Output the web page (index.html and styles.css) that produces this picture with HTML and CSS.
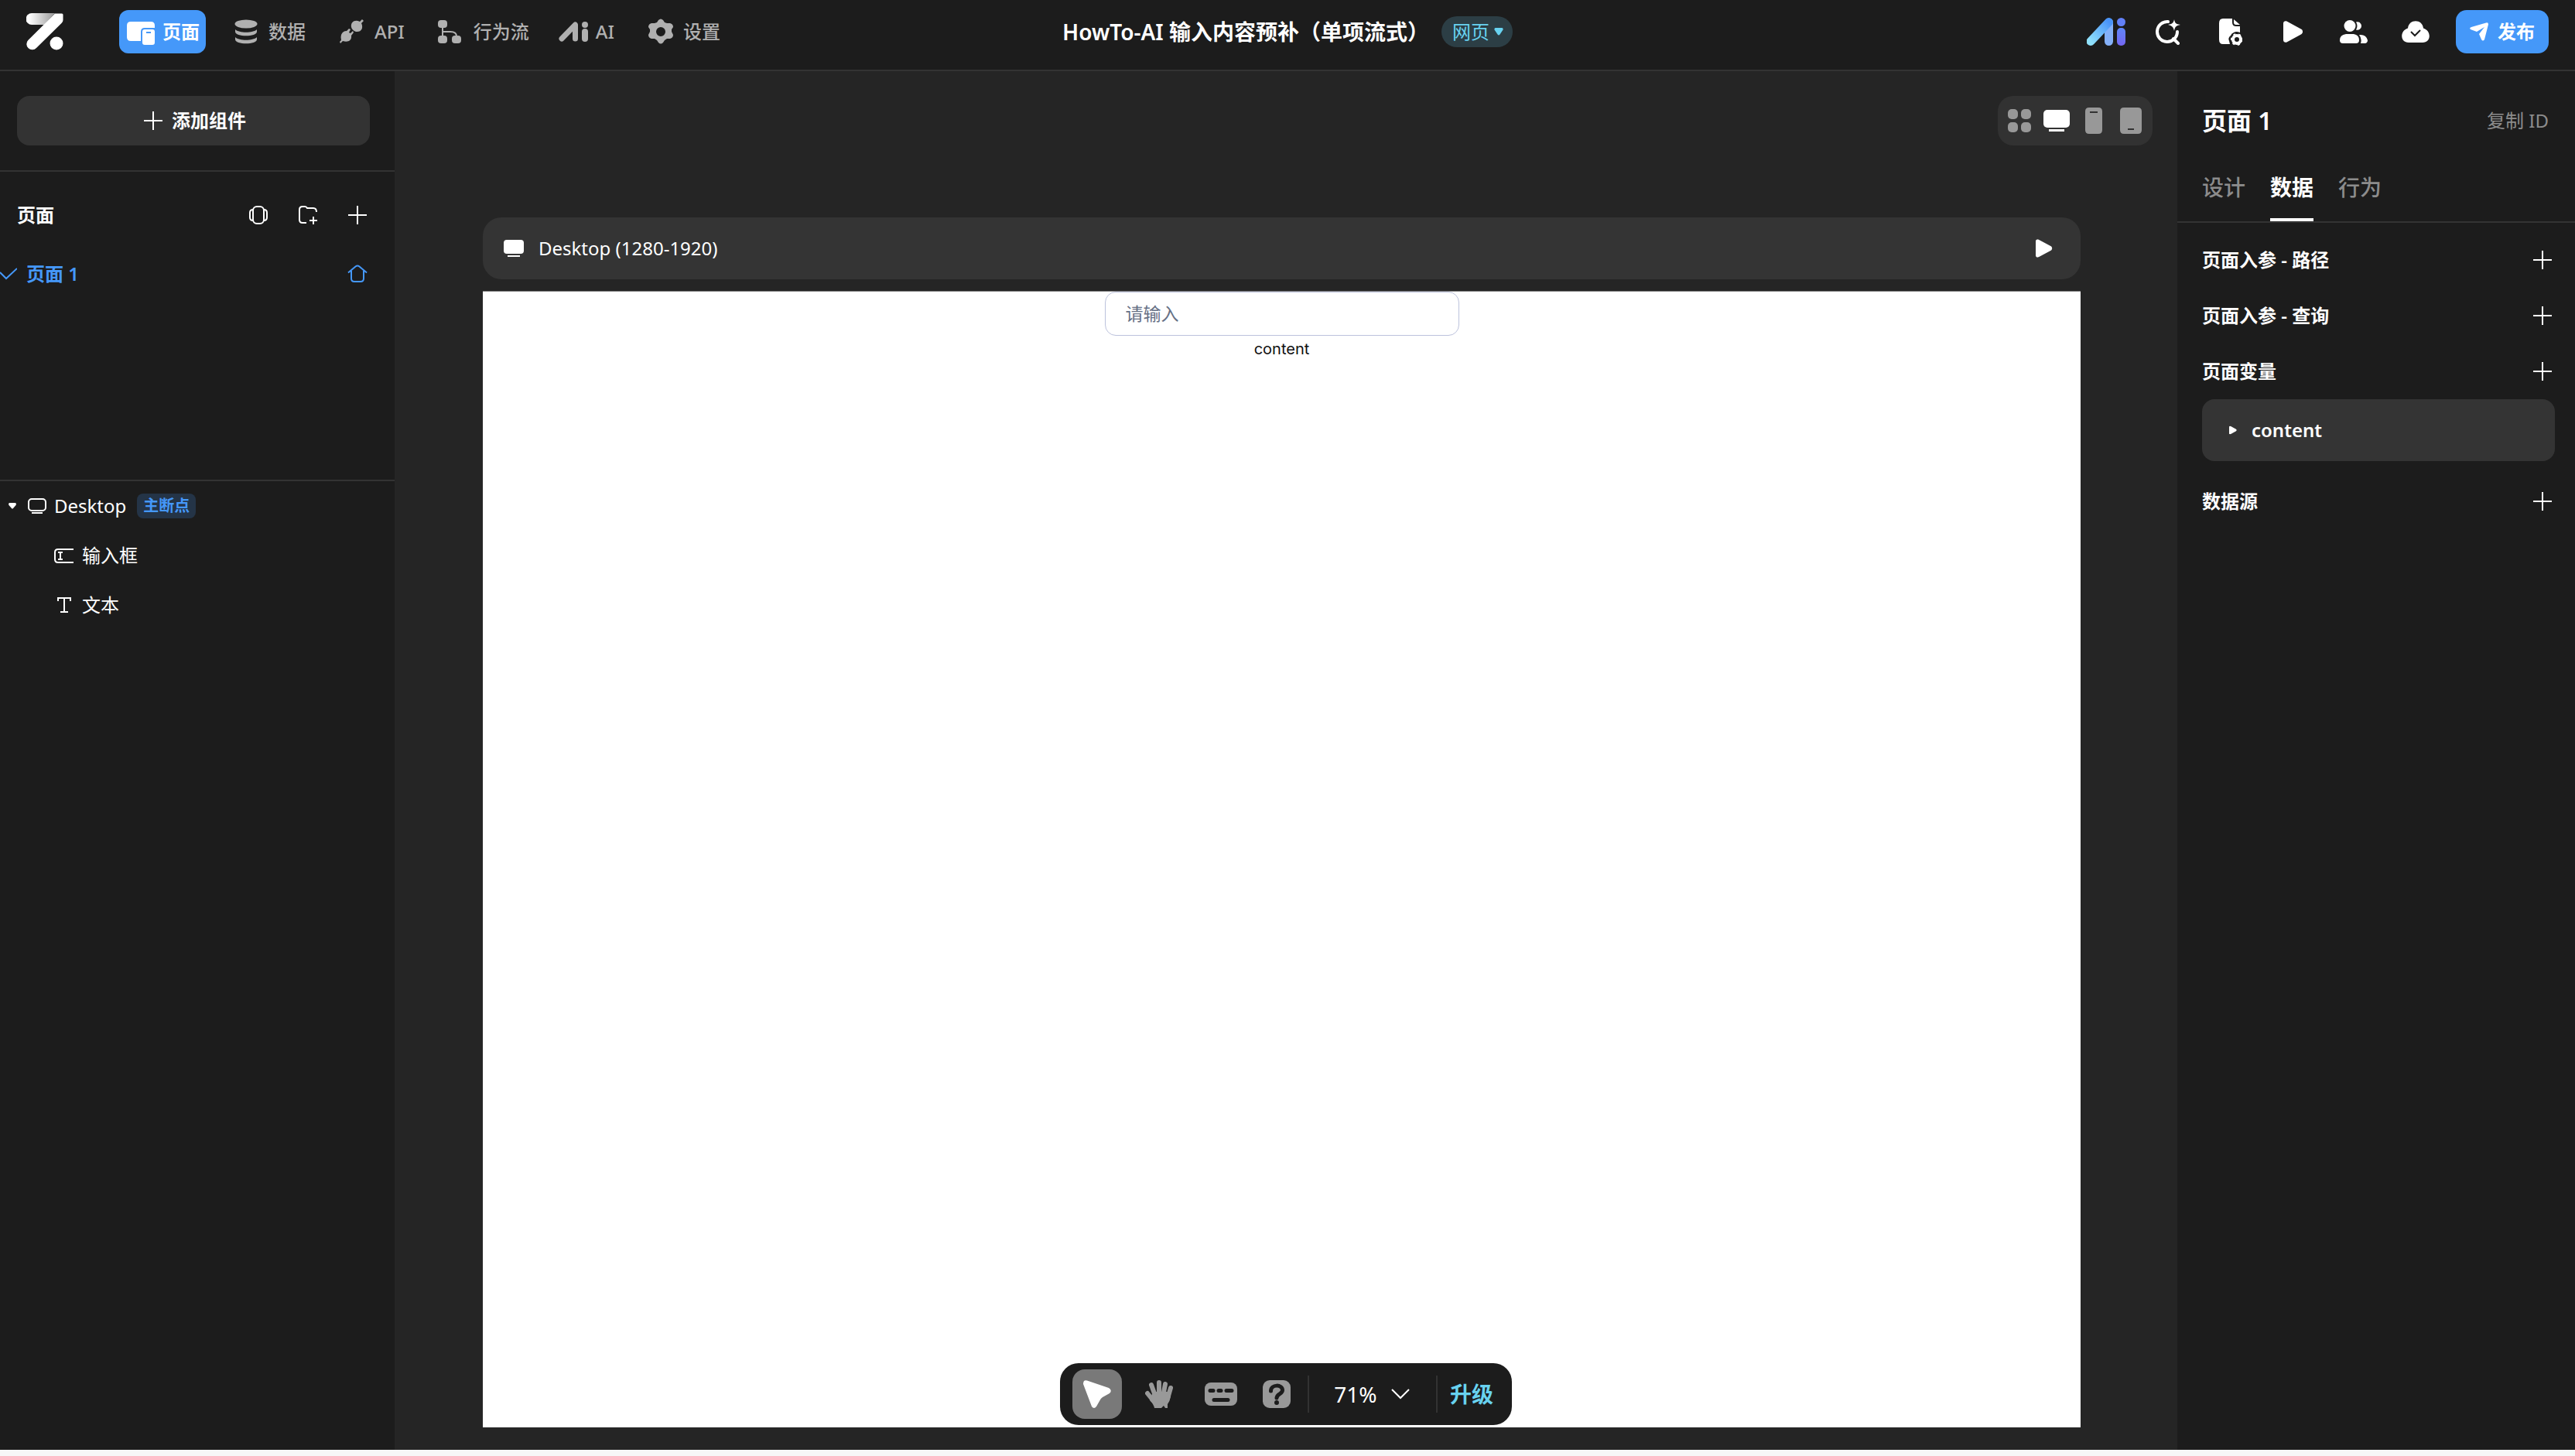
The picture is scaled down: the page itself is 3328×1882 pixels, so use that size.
FILE: index.html
```
<!DOCTYPE html>
<html lang="zh-CN">
<head>
    <meta charset="UTF-8">
    <meta name="viewport" content="width=device-width, initial-scale=1.0">
    <title>HowTo-AI 输入内容预补（单项流式）</title>
    <link rel="stylesheet" href="styles.css">
</head>
<body>
    <svg class="sprite" aria-hidden="true">
        <symbol id="plus" viewBox="0 0 24 24"><path d="M12 0v24M0 12h24" stroke="currentColor" stroke-width="2" fill="none"/></symbol>
        <symbol id="screen" viewBox="0 0 26 22"><rect width="26" height="18" rx="4"/><path d="M5 20h16v2H5z"/></symbol>
        <symbol id="play" viewBox="0 0 26 28"><path d="M0 3.200C0 .8 2.500-.6 4.500.6l18.800 10.200c2.300 1.300 2.300 5.100 0 6.400L4.500 27.400C2.500 28.600 0 27.200 0 24.800z"/></symbol>
    </svg>
    <div class="app">
        <header class="topbar">
            <div class="topbar-left">
                <a href="#" class="logo" aria-label="首页">
                    <svg width="48" height="48" viewBox="0 0 48 48">
                        <defs>
                            <linearGradient id="logoBar" x1="0" x2="1"><stop offset="0.100" stop-color="#fff"/><stop offset="1" stop-color="#999"/></linearGradient>
                        </defs>
                        <path d="M7 0h30L23 15H7A7 7 0 0 1 7 0z" fill="url(#logoBar)"/>
                        <path d="M37 0.500h9q1.500 0 1.500 1.500v7q0 2-2 4L13 45A7.300 7.300 0 0 1 2.300 35z" fill="#fff"/>
                        <circle cx="39" cy="39" r="8.500" fill="#fff"/>
                    </svg>
                </a>
                <nav class="nav">
                    <button class="nav-item active">
                        <svg width="36" height="36" viewBox="0 0 36 36">
                            <path d="M5 5h26q5 0 5 5v3H23q-5 0-5 5v12H5q-5 0-5-5V10q0-5 5-5z"/>
                            <path fill-rule="evenodd" d="M23 15h10q3 0 3 3v14q0 3-3 3H23q-3 0-3-3V18q0-3 3-3zm2 3v2h6v-2z"/>
                        </svg>
                        页面
                    </button>
                    <button class="nav-item">
                        <svg width="36" height="36" viewBox="0 0 36 36">
                            <ellipse cx="17" cy="8" rx="14.500" ry="5.500"/>
                            <path d="M3 15c5 5 23 5 28 0v3c0 7-28 7-28 0zM3 25c5 5 23 5 28 0v3c0 7-28 7-28 0z"/>
                        </svg>
                        数据
                    </button>
                    <button class="nav-item">
                        <svg width="36" height="36" viewBox="0 0 36 36">
                            <path d="M16 12c-1-7 5-10 11-7l3-3 2 2-3 3c3 6 0 12-7 11q-5-2-6-6z"/>
                            <path d="M3 22q2-5 7-5l3-3 2 1-2 4 2 1 3-3 1 2-3 4c1 7-5 9-11 7l-3 3-1-2 2-2q-1-4 0-7z"/>
                        </svg>
                        API
                    </button>
                    <button class="nav-item">
                        <svg width="36" height="36" viewBox="0 0 36 36">
                            <rect y="3" width="12" height="10" rx="4"/><rect y="23" width="12" height="10" rx="4"/><rect x="18" y="23" width="12" height="10" rx="4"/>
                            <path d="M6 12v12M6 18h10q8 0 8 6" fill="none" stroke="currentColor" stroke-width="2"/>
                        </svg>
                        行为流
                    </button>
                    <button class="nav-item nav-ai">
                        <svg width="38" height="36" viewBox="0 0 38 36">
                            <path d="M4 27L21.500 9V27" fill="none" stroke="currentColor" stroke-width="7" stroke-linecap="round" stroke-linejoin="round"/>
                            <circle cx="34" cy="9" r="4"/><rect x="30" y="14" width="8" height="17" rx="4"/>
                        </svg>
                        AI
                    </button>
                    <button class="nav-item">
                        <svg width="36" height="36" viewBox="0 0 36 36">
                            <path fill-rule="evenodd" d="M14 3q3-3 6 0l2 3 3 1 4 0q4 1 4 5l-2 3v3l2 4q0 4-4 5h-4l-3 2-2 3q-3 3-6 0l-2-3-3-2H5q-4-1-4-5l2-4v-3l-2-3q0-4 4-5h4l3-1zm3 9a6 6 0 1 0 0 12 6 6 0 0 0 0-12z"/>
                        </svg>
                        设置
                    </button>
                </nav>
            </div>
            <div class="project">
                <h1>HowTo-AI 输入内容预补（单项流式）</h1>
                <button class="platform">网页
                    <svg width="12" height="12" viewBox="0 0 12 12"><path d="M1.500 1h9Q12 1 11.500 3.500L7.500 9.500Q6 11.500 4.500 9.500L.5 3.500Q0 1 1.500 1z"/></svg>
                </button>
            </div>
            <div class="actions">
                <button class="action" aria-label="AI 助手">
                    <svg width="50" height="36" viewBox="0 0 50 36">
                        <defs>
                            <linearGradient id="aiStroke" x1="0" y1="1" x2="1" y2="0"><stop offset="0" stop-color="#8fe0fb"/><stop offset="1" stop-color="#4a94f8"/></linearGradient>
                            <linearGradient id="aiDot" x1="0" y1="0" x2="0" y2="1"><stop offset="0" stop-color="#5f86f7"/><stop offset="1" stop-color="#7466f2"/></linearGradient>
                        </defs>
                        <path d="M28.500 6v24.500" stroke="#84b0f8" stroke-width="11" stroke-linecap="round"/>
                        <path d="M5 30.500L28.500 5.500" stroke="url(#aiStroke)" stroke-width="11" stroke-linecap="round"/>
                        <circle cx="44.500" cy="5.500" r="5.500" fill="#6280f7"/><rect x="39" y="13" width="11" height="23" rx="5" fill="url(#aiDot)"/>
                    </svg>
                </button>
                <button class="action" aria-label="智能搜索">
                    <svg width="32" height="34" viewBox="0 0 32 34">
                        <path d="M16 4A13 13 0 1 0 28 17M23 26l6 6" fill="none" stroke="currentColor" stroke-width="4" stroke-linecap="round"/>
                        <path d="M24 1c1 5 2 6 8 7-6 1-7 3-8 8-1-5-3-7-8-8 5-1 7-2 8-7z"/>
                    </svg>
                </button>
                <button class="action" aria-label="文档设置">
                    <svg width="32" height="36" viewBox="-1 0 32 36">
                        <path d="M6 1h12v5q0 5 5 5h5v8q-5-2-8 0-3 1-4 4-4 3-2 7l1 4H6q-5 0-5-6V7q0-6 5-6z"/><path d="M20 2l8 7h-5q-3 0-3-3z"/>
                        <circle cx="24" cy="28" r="5" fill="none" stroke="currentColor" stroke-width="4"/>
                        <circle cx="24" cy="28" r="7" fill="none" stroke="currentColor" stroke-width="2" stroke-dasharray="3 4"/>
                    </svg>
                </button>
                <button class="action" aria-label="预览"><svg width="30" height="28" viewBox="-4 0 30 28"><use href="#play" width="26" height="28"/></svg></button>
                <button class="action" aria-label="协作">
                    <svg width="36" height="30" viewBox="0 0 36 30">
                        <circle cx="13" cy="7.500" r="7.500"/><path d="M21 2.500a5.300 5.300 0 1 1 0 10q3-5 0-10z"/>
                        <path d="M8 18h10q7 1 7 8 0 4-4 4H4q-4 0-4-4 0-7 8-8zM25 19q9-1 11 7 0 3-3 4h-6q2-6-2-11z"/>
                    </svg>
                </button>
                <button class="action" aria-label="已保存">
                    <svg width="36" height="28" viewBox="0 0 36 28">
                        <path d="M8 9.500C9-3 27-3 28 9.500 39 13 38 28 27 28H9C-2 28-3 13 8 9.500z"/>
                        <path d="M12 14l5 5 7-7" fill="none" stroke="#1c1c1c" stroke-width="2"/>
                    </svg>
                </button>
                <button class="publish">
                    <svg width="24" height="24" viewBox="0 0 24 24"><path d="M21 .5q3-1 3 2L19 22q-2 3-4 0l-3-7 7-9-10 6L1 9q-2-2 1-3z"/></svg>
                    发布
                </button>
            </div>
        </header>

        <div class="workspace">
            <aside class="sidebar">
                <div class="add-wrap">
                    <button class="add-component"><svg width="24" height="24"><use href="#plus"/></svg>添加组件</button>
                </div>
                <section class="pages">
                    <div class="pages-head">
                        <h2>页面</h2>
                        <button aria-label="弹窗">
                            <svg width="24" height="24" viewBox="0 0 24 24" fill="none" stroke="currentColor" stroke-width="2"><rect x="5" y="1" width="14" height="22" rx="5"/><path d="M5 5Q1 5 1 9v6q0 4 4 4M19 5q4 0 4 4v6q0 4-4 4"/></svg>
                        </button>
                        <button aria-label="新建文件夹">
                            <svg width="26" height="24" viewBox="0 0 26 24" fill="none" stroke="currentColor" stroke-width="2"><path d="M11 22H6q-4 0-4-4V5q0-4 4-4h3q2 0 3 2h8q4 0 4 5M20 14v10M15 19h10"/></svg>
                        </button>
                        <button aria-label="新建页面"><svg width="24" height="24"><use href="#plus"/></svg></button>
                    </div>
                    <a href="#" class="page-row">
                        <svg width="22" height="16" viewBox="0 0 22 16" fill="none" stroke="currentColor" stroke-width="2"><path d="M0 6l8 8L22 1"/></svg>
                        <span>页面 1</span>
                        <svg width="26" height="24" viewBox="0 0 26 24" fill="none" stroke="currentColor" stroke-width="2"><path d="M1 10.500L10.500 2.500q2.500-2 5 0L25 10.500M5 8v10q0 4 4 4h8q4 0 4-4V8"/></svg>
                    </a>
                </section>
                <ul class="layers">
                    <li class="layer">
                        <svg class="caret" width="10" height="8" viewBox="0 0 10 8"><path d="M1 0h8q1.500 1 .5 3L6 7Q5 8 4 7L.5 3Q-.5 1 1 0z"/></svg>
                        <svg width="24" height="20" viewBox="0 0 24 20" fill="none" stroke="currentColor" stroke-width="2"><rect x="1" y="1" width="22" height="15" rx="4"/><path d="M5 19h14"/></svg>
                        <span>Desktop</span>
                        <span class="tag">主断点</span>
                    </li>
                    <li class="layer child">
                        <svg width="26" height="20" viewBox="0 0 26 20" fill="none" stroke="currentColor" stroke-width="2"><path d="M25 2H5Q1 2 1 6v9q0 4 4 4h20M5 6h6M5 15h6M8 6v9"/></svg>
                        <span>输入框</span>
                    </li>
                    <li class="layer child">
                        <svg width="26" height="20" viewBox="0 0 26 20" fill="none" stroke="currentColor" stroke-width="2"><path d="M5 5V1h16v4M13 1v18M8 19h10"/></svg>
                        <span>文本</span>
                    </li>
                </ul>
            </aside>

            <main class="stage">
                <div class="devices">
                    <button aria-label="全部">
                        <svg width="30" height="30" viewBox="0 0 30 30"><rect width="13" height="13" rx="5"/><rect x="17" width="13" height="13" rx="5"/><rect y="17" width="13" height="13" rx="5"/><rect x="17" y="17" width="13" height="13" rx="5"/></svg>
                    </button>
                    <button class="active" aria-label="桌面"><svg width="34" height="28" viewBox="0 0 34 28"><rect width="34" height="23" rx="5"/><path d="M7 25h20v3H7z"/></svg></button>
                    <button aria-label="手机"><svg width="22" height="34" viewBox="0 0 22 34"><path fill-rule="evenodd" d="M5 0h12q5 0 5 5v24q0 5-5 5H5q-5 0-5-5V5q0-5 5-5zm1 5v2h10V5z"/></svg></button>
                    <button aria-label="平板"><svg width="28" height="34" viewBox="0 0 28 34"><path fill-rule="evenodd" d="M5 0h18q5 0 5 5v24q0 5-5 5H5q-5 0-5-5V5q0-5 5-5zm5 27v2h8v-2z"/></svg></button>
                </div>
                <div class="frame-bar">
                    <svg width="26" height="22"><use href="#screen"/></svg>
                    <span>Desktop (1280-1920)</span>
                    <button aria-label="运行"><svg width="22" height="24" viewBox="0 0 26 28"><use href="#play" width="26" height="28"/></svg></button>
                </div>
                <div class="canvas">
                    <input type="text" class="field" placeholder="请输入" aria-label="请输入">
                    <p>content</p>
                </div>
                <div class="toolbar">
                    <button class="tool selected" aria-label="选择">
                        <svg width="36" height="36" viewBox="0 0 36 36"><path d="M0 5Q0-1 5 .5L33 10q5 3 1 7l-9 5q-3 2-4 5l-4 7q-3 4-6 0z"/></svg>
                    </button>
                    <button class="tool" aria-label="移动">
                        <svg width="36" height="36" viewBox="0 0 36 36">
                            <path d="M3 17l8 10M8 6l5 14M18 3v18M26 5l-3 16M33 10l-4 14" fill="none" stroke="currentColor" stroke-width="6" stroke-linecap="round"/>
                            <path d="M10 15h20l3 6q-1 6-4 10v5h-3l-2-3-3 3h-9q-1-5-6-10z"/>
                        </svg>
                    </button>
                    <button class="tool" aria-label="快捷键">
                        <svg width="42" height="30" viewBox="0 0 42 30"><rect width="42" height="30" rx="8"/><path d="M7 10.500h4M18 10.500h3M28 10.500h7M12 22.500h18" stroke="#1c1c1c" stroke-width="5" stroke-linecap="round"/></svg>
                    </button>
                    <button class="tool help" aria-label="帮助">
                        <svg width="36" height="36" viewBox="0 0 36 36"><rect width="36" height="36" rx="9"/><path d="M10.500 14c0-9 15-9 15-1 0 5-7 4-7.500 10" fill="none" stroke="#1c1c1c" stroke-width="5" stroke-linecap="round"/><circle cx="18" cy="29" r="3" fill="#1c1c1c"/></svg>
                    </button>
                    <button class="zoom">71%
                        <svg width="24" height="14" viewBox="0 0 24 14"><path d="M1 1l11 11L23 1" fill="none" stroke="currentColor" stroke-width="2"/></svg>
                    </button>
                    <button class="upgrade">升级</button>
                </div>
            </main>

            <aside class="panel">
                <div class="panel-head">
                    <h2>页面 1</h2>
                    <button>复制 ID</button>
                </div>
                <div class="tabs">
                    <button>设计</button>
                    <button class="active">数据</button>
                    <button>行为</button>
                </div>
                <div class="sections">
                    <div class="section">
                        <h3>页面入参 - 路径</h3>
                        <button aria-label="添加路径参数"><svg width="24" height="24"><use href="#plus"/></svg></button>
                    </div>
                    <div class="section">
                        <h3>页面入参 - 查询</h3>
                        <button aria-label="添加查询参数"><svg width="24" height="24"><use href="#plus"/></svg></button>
                    </div>
                    <div class="section">
                        <h3>页面变量</h3>
                        <button aria-label="添加变量"><svg width="24" height="24"><use href="#plus"/></svg></button>
                    </div>
                    <button class="variable">
                        <svg width="10" height="12" viewBox="0 0 26 28"><use href="#play" width="26" height="28"/></svg>
                        content
                    </button>
                    <div class="section">
                        <h3>数据源</h3>
                        <button aria-label="添加数据源"><svg width="24" height="24"><use href="#plus"/></svg></button>
                    </div>
                </div>
            </aside>
        </div>
    </div>
</body>
</html>
```
FILE: styles.css
```
* {
    box-sizing: border-box;
    margin: 0;
    padding: 0;
}

body {
    background: #f7f7f7;
    color: #ffffff;
    font-family: "Noto Sans", "Noto Sans CJK SC", sans-serif;
    font-size: 24px;
    line-height: 32px;
}

button {
    display: flex;
    align-items: center;
    justify-content: center;
    border: none;
    background: none;
    color: inherit;
    font: inherit;
    cursor: pointer;
}

a {
    color: inherit;
    text-decoration: none;
}

svg {
    display: block;
    flex-shrink: 0;
    fill: currentColor;
}

svg[fill="none"] {
    fill: none;
}

.sprite {
    position: absolute;
    width: 0;
    height: 0;
}

.app {
    display: flex;
    flex-direction: column;
    min-height: calc(100vh - 8px);
    background: #1c1c1c;
}

/* top bar */
.topbar {
    display: grid;
    grid-template-columns: 1fr auto 1fr;
    align-items: center;
    height: 92px;
    padding: 0 34px 8px;
    border-bottom: 2px solid #333333;
}

.topbar-left,
.nav,
.project,
.actions {
    display: flex;
    align-items: center;
}

.logo {
    margin-right: 72px;
}

.nav {
    gap: 25px;
    color: #b0b0b0;
    font-weight: 500;
}

.nav-item {
    gap: 10px;
    height: 56px;
    padding: 0 8px 0 10px;
    border-radius: 12px;
    white-space: nowrap;
}

.nav-item.active {
    background: #4598f9;
    color: #ffffff;
    font-weight: 600;
}

.nav-ai {
    padding-left: 5px;
}

.project {
    gap: 16px;
}

.project h1 {
    font-size: 28px;
    font-weight: 600;
    white-space: nowrap;
}

.platform {
    gap: 6px;
    height: 40px;
    padding: 0 12px 0 14px;
    border-radius: 20px;
    background: #2c3e45;
    color: #68d2f0;
}

.actions {
    justify-content: flex-end;
}

.action {
    width: 80px;
    height: 56px;
}

.publish {
    gap: 12px;
    width: 120px;
    height: 56px;
    margin-left: 12px;
    border-radius: 14px;
    background: #4598f9;
    font-weight: 600;
}

.workspace {
    display: flex;
    flex: 1;
}

/* left sidebar */
.sidebar {
    width: 510px;
    flex-shrink: 0;
}

.add-wrap {
    padding: 32px 32px 32px 22px;
    border-bottom: 2px solid #333333;
}

.add-component {
    gap: 12px;
    width: 100%;
    height: 64px;
    padding-left: 4px;
    border-radius: 16px;
    background: #333333;
    font-weight: 600;
}

.pages {
    height: 400px;
    padding-top: 24px;
    border-bottom: 2px solid #333333;
}

.pages-head {
    display: flex;
    align-items: center;
    height: 64px;
    padding: 0 16px 0 22px;
}

.pages-head h2 {
    flex: 1;
    font-size: 24px;
    font-weight: 600;
}

.pages-head button {
    width: 64px;
    height: 64px;
}

.page-row {
    display: flex;
    align-items: center;
    gap: 12px;
    height: 64px;
    margin-top: 12px;
    padding-right: 35px;
    color: #4598f9;
    font-weight: 600;
}

.page-row span {
    flex: 1;
}

.layers {
    list-style: none;
}

.layer {
    display: flex;
    align-items: center;
    gap: 10px;
    height: 64px;
    padding-left: 11px;
}

.layer .caret {
    margin-right: 5px;
}

.layer.child {
    padding-left: 70px;
}

.tag {
    margin-left: 4px;
    padding: 0 8px;
    border-radius: 8px;
    background: #243447;
    color: #4598f9;
    font-size: 20px;
    font-weight: 600;
}

/* stage */
.stage {
    position: relative;
    display: flex;
    flex: 1;
    flex-direction: column;
    padding: 32px 125px 29px 114px;
    background: #252525;
}

.devices {
    display: flex;
    align-self: flex-end;
    height: 64px;
    margin-right: -93px;
    padding: 0 4px;
    border-radius: 20px;
    background: #323232;
    color: #989898;
}

.devices button {
    width: 48px;
}

.devices .active {
    color: #ffffff;
}

.frame-bar {
    display: flex;
    align-items: center;
    gap: 19px;
    height: 80px;
    margin-top: 93px;
    padding: 0 36px 0 27px;
    border-radius: 24px;
    background: #343434;
}

.frame-bar span {
    flex: 1;
}

.canvas {
    display: flex;
    flex: 1;
    flex-direction: column;
    align-items: center;
    margin-top: 15px;
    border-top: 1px solid #808080;
    background: #ffffff;
    color: #111111;
}

.canvas p {
    margin-top: 1px;
    font-family: Inter, sans-serif;
    font-size: 20px;
}

.field {
    width: 458px;
    height: 57px;
    padding: 0 26px 3px;
    border: 1px solid #bcc2dc;
    border-radius: 14px;
    background: #ffffff;
    font-family: "Noto Sans CJK SC", sans-serif;
    font-size: 23px;
}

.field::placeholder {
    color: #667085;
}

.toolbar {
    position: absolute;
    bottom: 32px;
    left: 50%;
    display: flex;
    align-items: center;
    height: 80px;
    padding: 0 8px;
    border-radius: 24px;
    background: #1c1c1c;
    transform: translateX(-50%);
}

.tool {
    width: 80px;
    height: 64px;
    color: #999999;
}

.tool.selected {
    width: 64px;
    margin: 0 8px;
    border-radius: 16px;
    background: #797979;
    color: #ffffff;
}

.help {
    width: 64px;
    margin-right: 8px;
}

.zoom {
    gap: 18px;
    width: 168px;
    height: 48px;
    padding-right: 2px;
    border-right: 2px solid #333333;
    border-left: 2px solid #333333;
    font-size: 28px;
}

.upgrade {
    padding: 0 16px;
    color: #68d2f0;
    font-size: 28px;
    font-weight: 600;
    white-space: nowrap;
}

/* right panel */
.panel {
    width: 514px;
    flex-shrink: 0;
}

.panel-head {
    display: flex;
    align-items: center;
    justify-content: space-between;
    height: 128px;
    padding: 0 34px 0 32px;
}

.panel-head h2 {
    font-size: 32px;
    font-weight: 600;
}

.panel-head button {
    color: #8c8c8c;
}

.tabs {
    display: flex;
    gap: 32px;
    height: 68px;
    padding: 0 32px;
    border-bottom: 2px solid #333333;
    color: #8c8c8c;
    font-size: 28px;
    font-weight: 500;
}

.tabs button {
    align-items: flex-start;
    height: 66px;
    border-bottom: 4px solid transparent;
    line-height: 44px;
}

.tabs .active {
    border-color: #ffffff;
    color: #ffffff;
    font-weight: 600;
}

.sections {
    padding: 12px 26px 12px 32px;
}

.section {
    display: flex;
    align-items: center;
    justify-content: space-between;
    height: 72px;
    padding-right: 4px;
}

.section h3 {
    font-size: 24px;
    font-weight: 600;
}

.variable {
    justify-content: flex-start;
    gap: 19px;
    width: 100%;
    height: 80px;
    margin-bottom: 16px;
    padding: 0 35px;
    border-radius: 16px;
    background: #343434;
    font-weight: 600;
}
```
